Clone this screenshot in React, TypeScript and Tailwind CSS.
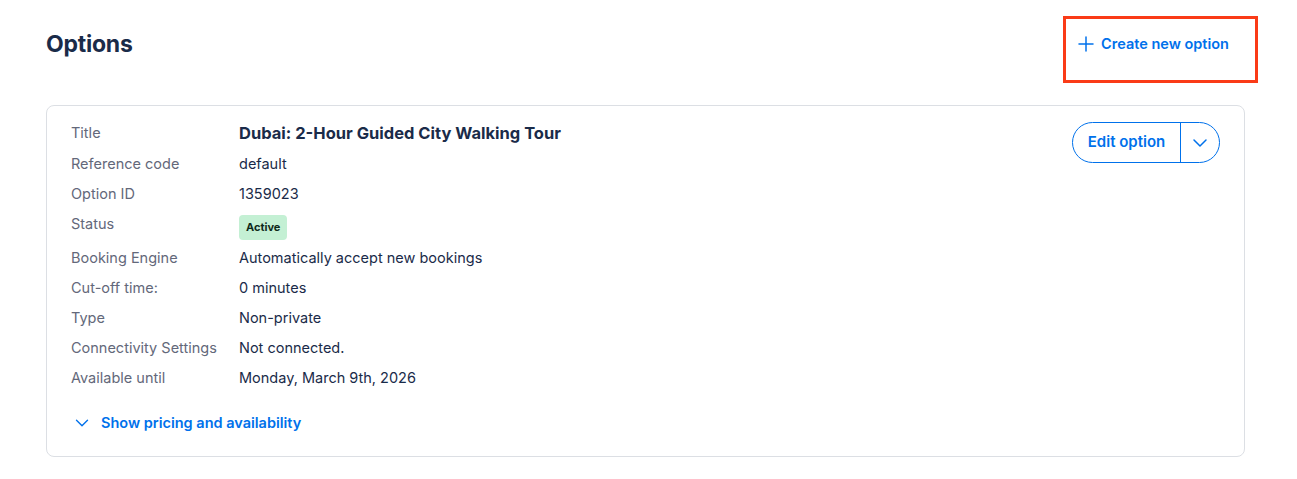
import { ChevronDown, Plus } from 'lucide-react';

const rows: { label: string; value: string; h: string }[] = [
  { label: 'Reference code', value: 'default', h: 'h-[30px]' },
  { label: 'Option ID', value: '1359023', h: 'h-[30px]' },
];

const rowsAfter = [
  { label: 'Booking Engine', value: 'Automatically accept new bookings' },
  { label: 'Cut-off time:', value: '0 minutes' },
  { label: 'Type', value: 'Non-private' },
  { label: 'Connectivity Settings', value: 'Not connected.' },
  { label: 'Available until', value: 'Monday, March 9th, 2026' },
];

export default function App() {
  return (
    <div className="min-h-[479px] bg-white pl-[46px] pr-[52px] font-['Inter',sans-serif] text-[14.5px] text-[#1a2b49]">
      <header className="relative flex items-center justify-between pt-[28px]">
        <h1 className="text-[23px] font-bold leading-8 tracking-[-0.01em]">Options</h1>
        <button className="flex items-center gap-[3px] pr-4 text-[14.5px] font-semibold leading-8 text-[#0071eb]">
          <Plus className="h-6 w-6" strokeWidth={1.5} />
          Create new option
        </button>
        <div className="pointer-events-none absolute right-[-13px] top-[16px] h-[67px] w-[195px] border-[3px] border-[#fa3b17]" />
      </header>

      <section className="mt-[45px] flex justify-between rounded-lg border border-[#dcdfe4] pl-6 pr-6 pb-[18px] pt-[11px]">
        <div>
          <div className="flex h-8 items-center">
            <span className="w-[168px] text-[#63687a]">Title</span>
            <span className="text-[16.5px] font-bold">Dubai: 2-Hour Guided City Walking Tour</span>
          </div>
          {rows.map((r) => (
            <div key={r.label} className={`flex items-center ${r.h}`}>
              <span className="w-[168px] text-[#63687a]">{r.label}</span>
              <span>{r.value}</span>
            </div>
          ))}
          <div className="flex h-[34px]">
            <span className="w-[168px] leading-[30px] text-[#63687a]">Status</span>
            <span className="mt-[6px] h-[25px] rounded bg-[#c4f0d4] px-[7px] text-[11px] font-bold leading-[25px] text-[#0e2a1a]">
              Active
            </span>
          </div>
          {rowsAfter.map((r) => (
            <div key={r.label} className="flex h-[30px] items-center">
              <span className="w-[168px] text-[#63687a]">{r.label}</span>
              <span>{r.value}</span>
            </div>
          ))}
          <button className="mt-[15px] flex h-[30px] items-center gap-2 font-semibold text-[#0071eb]">
            <ChevronDown className="h-[22px] w-[22px]" strokeWidth={1.5} />
            Show pricing and availability
          </button>
        </div>

        <div className="mt-[5px] flex h-[41px] self-start rounded-full border border-[#0071eb] text-[#0071eb]">
          <button className="w-[108px] border-r border-[#0071eb] text-[15px] font-semibold">Edit option</button>
          <button className="flex w-[38px] items-center justify-center">
            <ChevronDown className="h-6 w-6" strokeWidth={1.5} />
          </button>
        </div>
      </section>
    </div>
  );
}
